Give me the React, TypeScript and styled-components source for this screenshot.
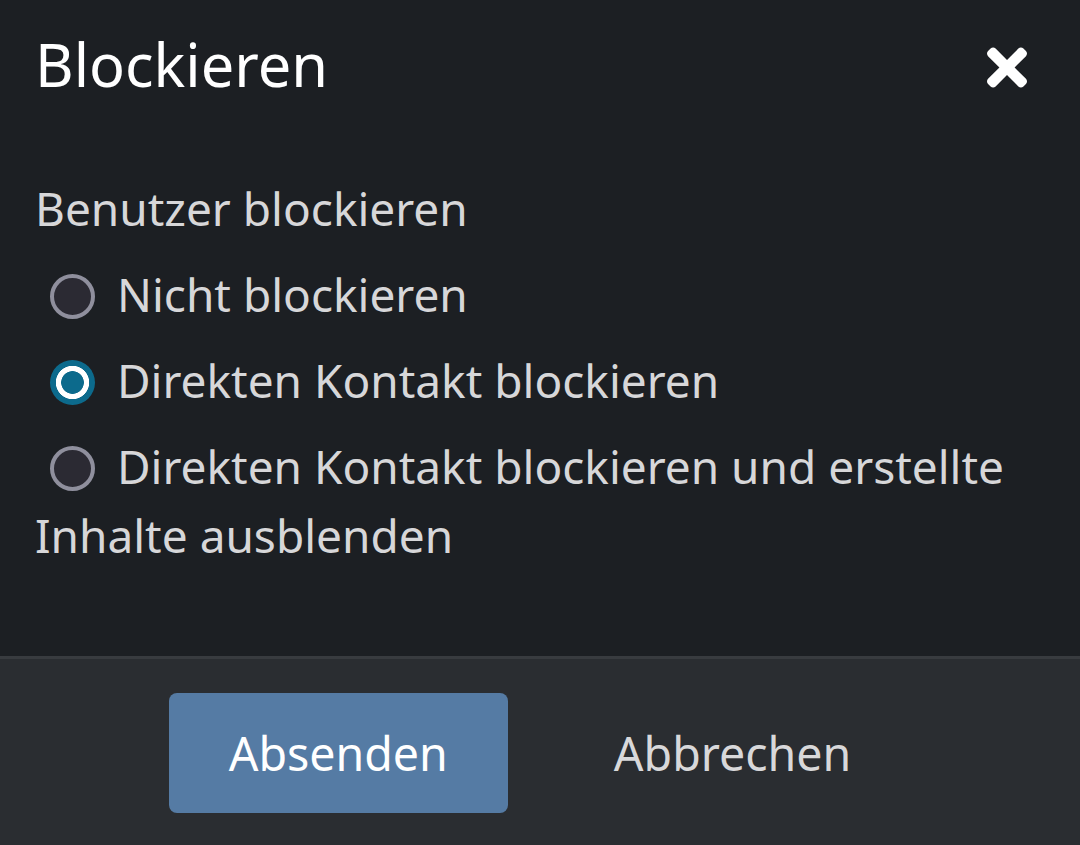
import React, { useState } from "react";
import styled, { createGlobalStyle } from "styled-components";

const Global = createGlobalStyle`
  html, body { margin: 0; padding: 0; background: #1c1f23; }
  body { font-family: "Noto Sans", "Open Sans", sans-serif; }
  * { box-sizing: border-box; }
`;

const Page = styled.div`
  height: 845px;
  display: flex;
  flex-direction: column;
  background: #1c1f23;
  color: #d7d7d9;
`;

const Header = styled.header`
  display: flex;
  align-items: center;
  justify-content: space-between;
  padding: 26px 53px 0 35px;
`;

const Title = styled.h1`
  margin: 0;
  font-size: 59.5px;
  line-height: 76px;
  font-weight: 400;
  color: #ffffff;
`;

const CloseButton = styled.button`
  border: 0;
  background: none;
  padding: 0;
  width: 40px;
  height: 41px;
  margin-top: 6px;
  display: flex;
  cursor: pointer;
  svg { width: 40px; height: 41px; display: block; }
`;

const Main = styled.main`
  flex: 1;
  padding: 72px 35px 0 35px;
  font-size: 46px;
  line-height: 69px;
`;

const Legend = styled.div`
  margin-bottom: 17px;
`;

const Option = styled.label`
  display: block;
  margin-bottom: 17px;
  cursor: pointer;
`;

const Radio = styled.span<{ $checked: boolean }>`
  display: inline-block;
  width: 45px;
  height: 45px;
  border-radius: 50%;
  margin: 0 22px 0 15px;
  vertical-align: -7px;
  ${(p) =>
    p.$checked
      ? `background: radial-gradient(circle, #0c6a8c 0 11px, #ffffff 11.7px 16.3px, #0c6a8c 17px);`
      : `background: #2b2a33; border: 4.5px solid #8f8f9d;`}
`;

const Footer = styled.footer`
  height: 189px;
  border-top: 3px solid #383b3f;
  background: #2a2d31;
  display: flex;
  justify-content: center;
  align-items: flex-start;
  gap: 46px;
  padding-top: 34px;
`;

const Button = styled.button<{ $primary?: boolean }>`
  height: 120px;
  padding: 0 60px;
  border: 0;
  border-radius: 8px;
  font-family: "Noto Sans", "Open Sans", sans-serif;
  font-size: 46.5px;
  background: ${(p) => (p.$primary ? "#557ba4" : "transparent")};
  color: ${(p) => (p.$primary ? "#ffffff" : "#d8d8da")};
  cursor: pointer;
`;

const options = [
  "Nicht blockieren",
  "Direkten Kontakt blockieren",
  "Direkten Kontakt blockieren und erstellte Inhalte ausblenden",
];

export default function App() {
  const [sel, setSel] = useState(1);
  return (
    <>
      <Global />
      <Page>
        <Header>
          <Title>Blockieren</Title>
          <CloseButton aria-label="Schließen">
            <svg viewBox="0 80 352 352" fill="#ffffff">
              <path d="M242.72 256l100.07-100.07c12.28-12.28 12.28-32.19 0-44.48l-22.24-22.24c-12.28-12.28-32.19-12.28-44.48 0L176 189.28 75.93 89.21c-12.28-12.28-32.19-12.28-44.48 0L9.21 111.45c-12.28 12.28-12.28 32.19 0 44.48L109.28 256 9.21 356.07c-12.28 12.28-12.28 32.19 0 44.48l22.24 22.24c12.28 12.28 32.2 12.28 44.48 0L176 322.72l100.07 100.07c12.28 12.28 32.2 12.28 44.48 0l22.24-22.24c12.28-12.28 12.28-32.19 0-44.48L242.72 256z" />
            </svg>
          </CloseButton>
        </Header>
        <Main>
          <Legend>Benutzer blockieren</Legend>
          {options.map((o, i) => (
            <Option key={i} onClick={() => setSel(i)}>
              <Radio $checked={sel === i} />
              {o}
            </Option>
          ))}
        </Main>
        <Footer>
          <Button $primary>Absenden</Button>
          <Button>Abbrechen</Button>
        </Footer>
      </Page>
    </>
  );
}
